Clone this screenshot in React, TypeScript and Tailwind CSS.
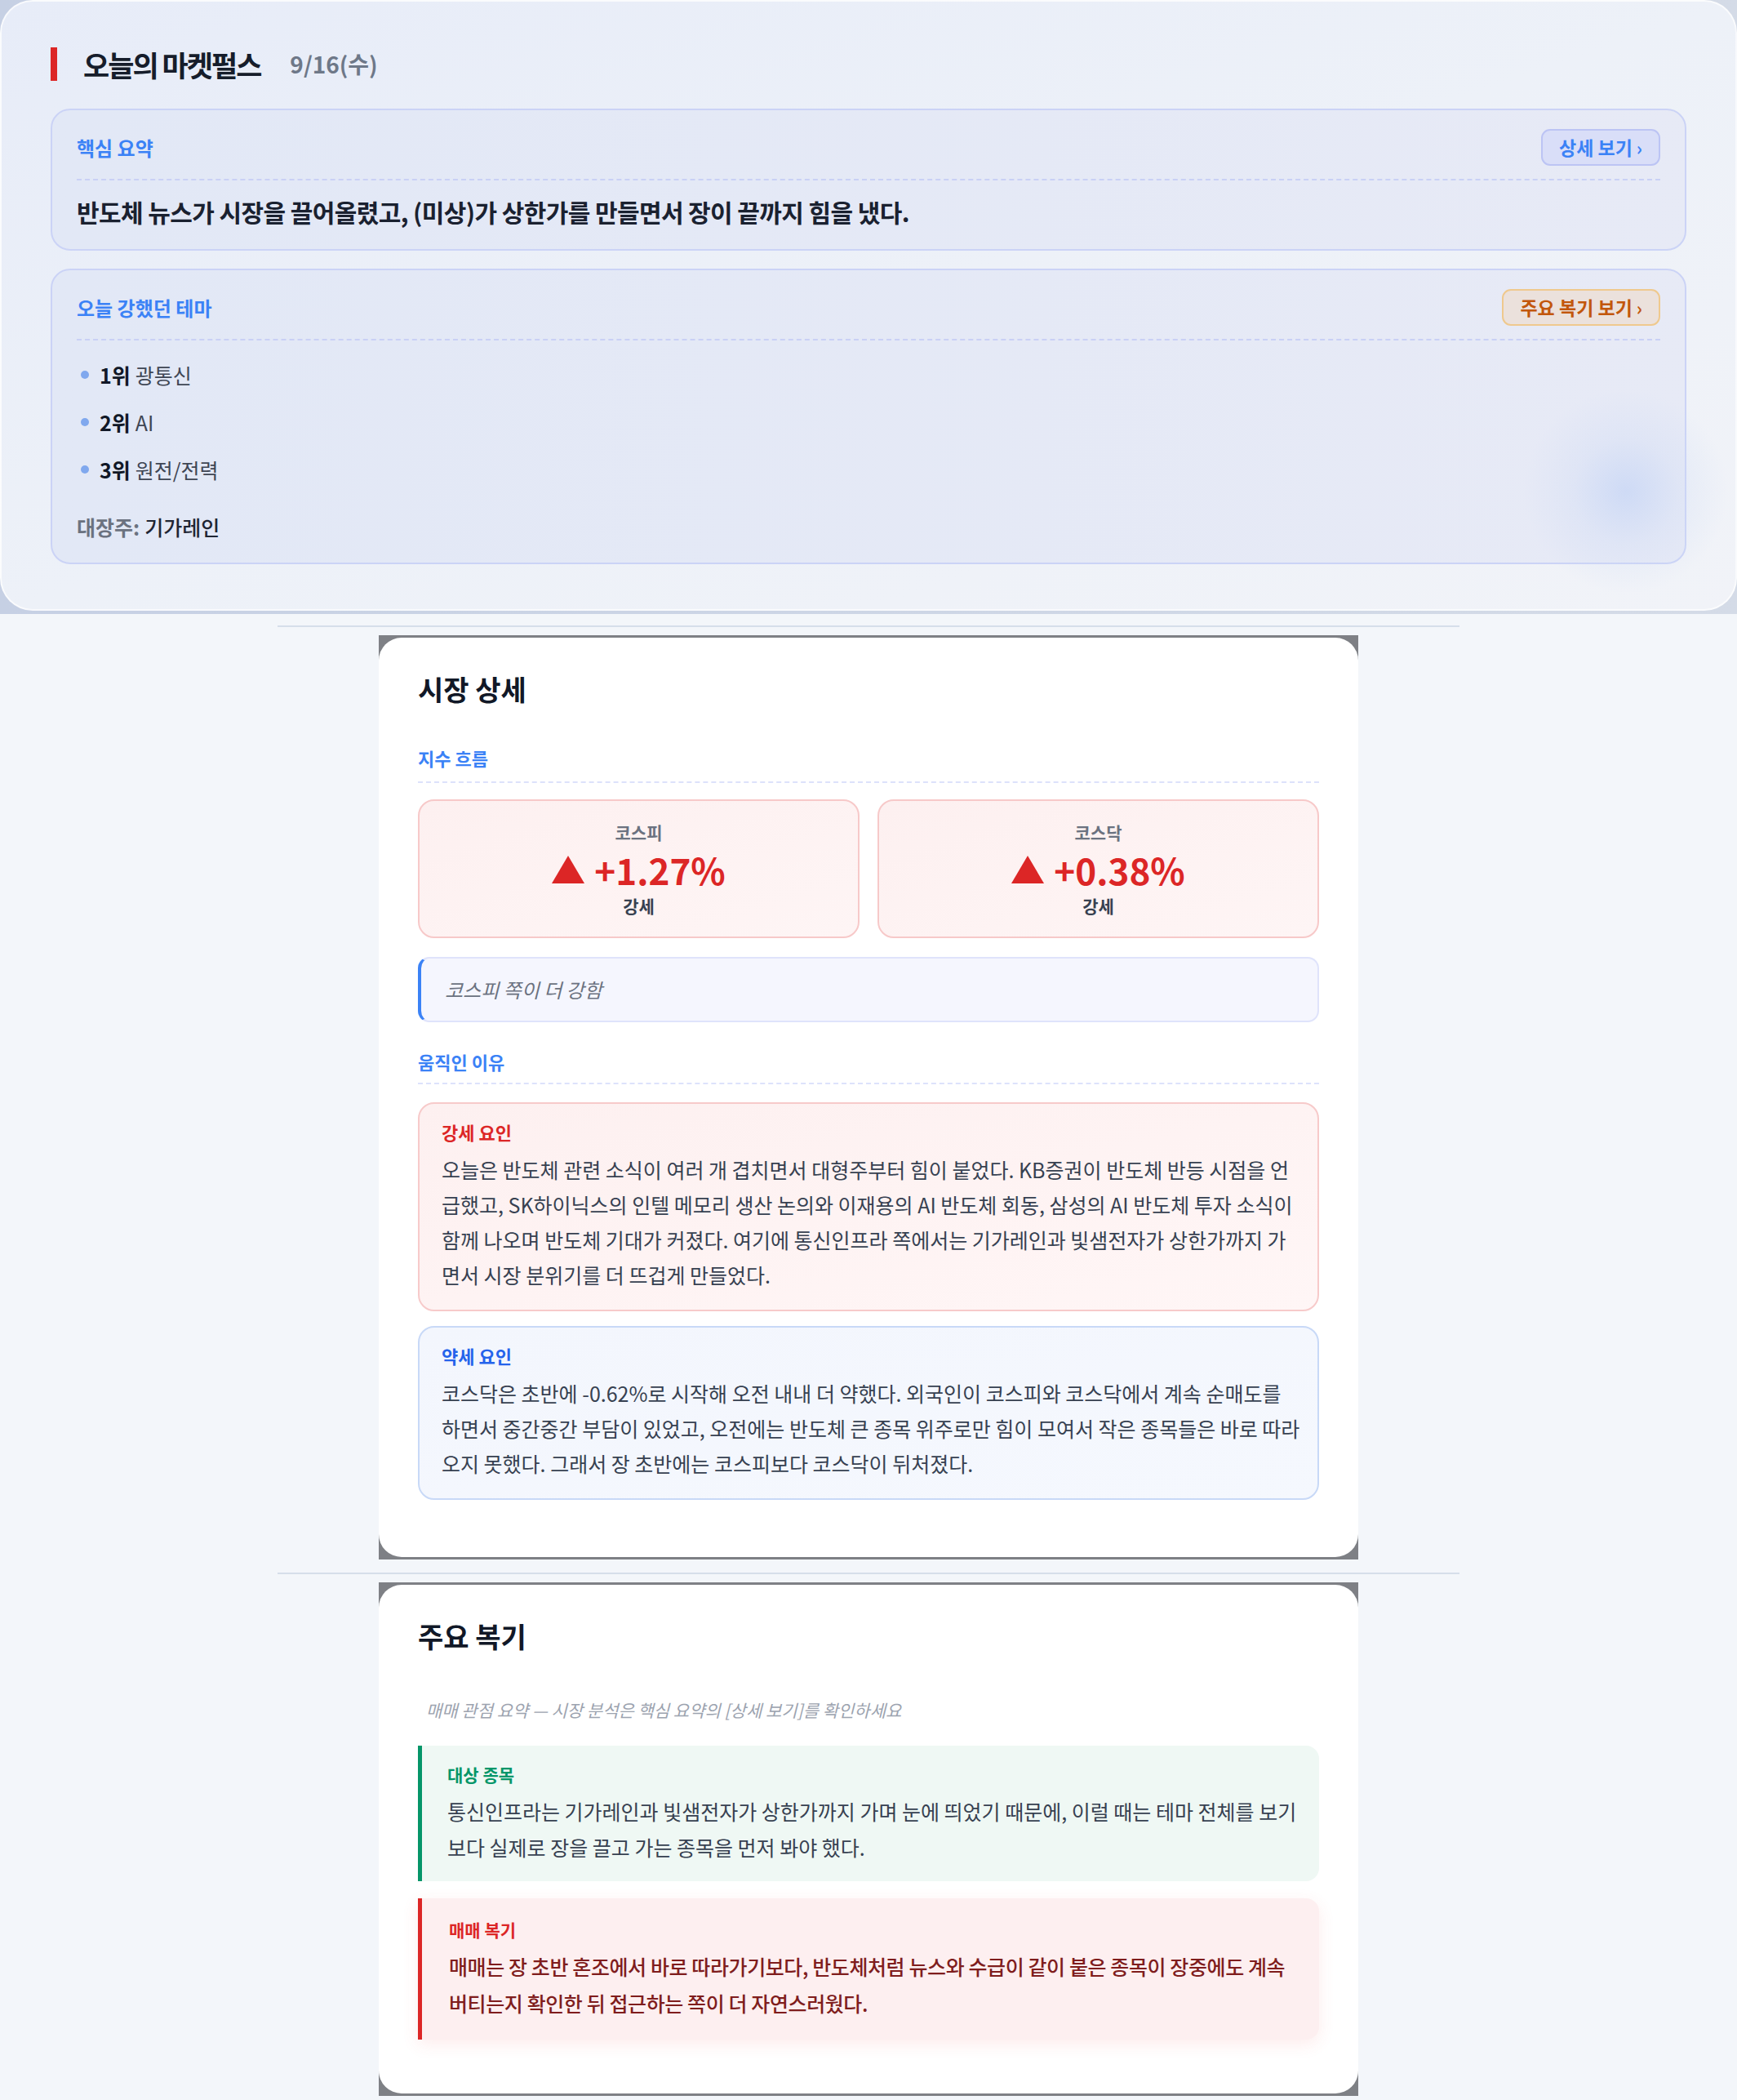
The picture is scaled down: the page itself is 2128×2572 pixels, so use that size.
import React from 'react';

const themes = [
  { rank: '1위', name: '광통신' },
  { rank: '2위', name: 'AI' },
  { rank: '3위', name: '원전/전력' },
];

function UpTriangle() {
  return (
    <svg width="40" height="34" viewBox="0 0 40 34" className="shrink-0">
      <path d="M20 0 L40 34 L0 34 Z" fill="#dc2626" />
    </svg>
  );
}

function IndexCard({ label, value }: { label: string; value: string }) {
  return (
    <div className="h-[170px] rounded-[20px] border-2 border-[#f7c9c9] bg-gradient-to-br from-[#fdf0f0] to-[#fef5f5] flex flex-col items-center justify-center">
      <div className="text-[21px] leading-[28px] font-semibold text-[#6b7280]">{label}</div>
      <div className="mt-[7px] h-[50px] flex items-center gap-[12px]">
        <UpTriangle />
        <span className="text-[44px] leading-[50px] font-bold text-[#dc2626]">{value}</span>
      </div>
      <div className="mt-[5px] text-[21px] leading-[28px] font-semibold text-[#374151]">강세</div>
    </div>
  );
}

function SectionLabel({ children, className }: { children: React.ReactNode; className: string }) {
  return (
    <div className={`border-b-2 border-dashed border-[#dde2fb] ${className}`}>
      <span className="text-[22px] leading-[28px] font-bold text-[#3b82f6]">{children}</span>
    </div>
  );
}

export default function App() {
  return (
    <div className="min-h-screen bg-[#f3f6fa] font-['Noto_Sans_CJK_KR',sans-serif] text-[#111827]">
      {/* Market pulse header panel */}
      <div className="bg-gradient-to-r from-[#c6d0e4] to-[#d4dbe7] pb-[4px]">
        <div className="relative overflow-hidden rounded-[40px] border-2 border-white/70 bg-gradient-to-br from-[#e7ecf8] via-[#edf1f8] to-[#f1f3f8] px-[60px] pt-[56px] pb-[55px]">
          <div className="flex items-center h-[41px]">
            <div className="w-[8px] h-[41px] bg-[#dc2626]" />
            <h1 className="ml-[32px] text-[35px] leading-[41px] font-bold tracking-[-2px] text-[#161d2b]">오늘의 마켓펄스</h1>
            <span className="ml-[36px] text-[28px] leading-[41px] font-semibold text-[#6e7888]">9/16(수)</span>
          </div>

          {/* Summary card */}
          <div className="mt-[34px] rounded-[24px] border-2 border-[#cbd3f6] bg-gradient-to-r from-[#e2e8f6] to-[#e7eaf6] px-[30px] pt-[23px] pb-[24px]">
            <div className="flex items-center justify-between pb-[16px] border-b-2 border-dashed border-[#c9d0f5]">
              <span className="text-[24px] leading-[28px] font-bold text-[#3b82f6]">핵심 요약</span>
              <button className="h-[45px] px-[20px] rounded-[11px] border-2 border-[#bcc4f4] bg-[#d9def8] text-[23px] font-semibold text-[#3b82f6] flex items-center">
                상세 보기<span className="ml-[5px] text-[22px]">›</span>
              </button>
            </div>
            <p className="mt-[16px] text-[30px] leading-[44px] font-semibold tracking-[-0.6px] text-[#1a2130]">
              반도체 뉴스가 시장을 끌어올렸고, (미상)가 상한가를 만들면서 장이 끝까지 힘을 냈다.
            </p>
          </div>

          {/* Themes card */}
          <div className="mt-[22px] rounded-[24px] border-2 border-[#cbd3f6] bg-gradient-to-r from-[#e2e8f6] to-[#e7eaf6] px-[30px] pt-[23px] pb-[22px]">
            <div className="flex items-center justify-between pb-[16px] border-b-2 border-dashed border-[#c9d0f5]">
              <span className="text-[24px] leading-[28px] font-bold text-[#3b82f6]">오늘 강했던 테마</span>
              <button className="h-[45px] px-[20px] rounded-[11px] border-2 border-[#efc98e] bg-[#ebe1dc] text-[23px] font-semibold text-[#c2570c] flex items-center">
                주요 복기 보기<span className="ml-[5px] text-[22px]">›</span>
              </button>
            </div>
            <ul className="mt-[13px] pl-[5px]">
              {themes.map((t) => (
                <li key={t.rank} className="h-[58px] flex items-center">
                  <span className="w-[10px] h-[10px] rounded-full bg-[#80a8ee]" />
                  <span className="ml-[13px] text-[25px] leading-[44px]">
                    <b className="font-bold text-[#111827]">{t.rank}</b>
                    <span className="ml-[6px] text-[#3f4654]">{t.name}</span>
                  </span>
                </li>
              ))}
            </ul>
            <div className="mt-[19px] text-[25px] leading-[44px]">
              <span className="font-semibold text-[#6b7280]">대장주:</span>
              <span className="ml-[6px] font-medium text-[#1f2533]">기가레인</span>
            </div>
          </div>

          <div className="pointer-events-none absolute left-[1860px] top-[470px] w-[260px] h-[260px] rounded-full bg-[radial-gradient(circle,rgba(190,208,245,0.6)_0%,rgba(205,218,245,0.3)_35%,rgba(230,235,248,0)_68%)]" />
        </div>
      </div>

      <div className="mx-auto mt-[14px] w-[1448px] h-[2px] bg-[#d6deea]" />

      {/* Market detail */}
      <div className="mx-auto mt-[10px] w-[1200px] bg-[#7e8085] py-[3px]">
        <div className="rounded-[28px] bg-white px-[48px] pt-[44px] pb-[70px]">
          <h2 className="text-[34px] leading-[38px] font-bold text-[#111827]">시장 상세</h2>

          <SectionLabel className="mt-[51px] pb-[14px]">지수 흐름</SectionLabel>
          <div className="mt-[20px] grid grid-cols-2 gap-[22px]">
            <IndexCard label="코스피" value="+1.27%" />
            <IndexCard label="코스닥" value="+0.38%" />
          </div>
          <div className="mt-[23px] h-[80px] flex items-center rounded-[14px] border-2 border-l-4 border-[#dfe3fb] border-l-[#3b82f6] bg-[#f5f6fe] pl-[29px]">
            <span className="text-[24px] italic text-[#6b7280]">코스피 쪽이 더 강함</span>
          </div>

          <SectionLabel className="mt-[34px] pb-[11px]">움직인 이유</SectionLabel>
          <div className="mt-[22px] rounded-[20px] border-2 border-[#f7caca] bg-gradient-to-br from-[#fdf0f0] to-[#fff6f6] px-[27px] pt-[21px] pb-[21px]">
            <div className="text-[22px] leading-[26px] font-bold text-[#dc2626]">강세 요인</div>
            <p className="mt-[12px] text-[25px] leading-[43px] text-[#374151]">
              오늘은 반도체 관련 소식이 여러 개 겹치면서 대형주부터 힘이 붙었다. KB증권이 반도체 반등 시점을 언급했고, SK하이닉스의 인텔 메모리 생산 논의와 이재용의 AI 반도체 회동, 삼성의 AI 반도체 투자 소식이 함께 나오며 반도체 기대가 커졌다. 여기에 통신인프라 쪽에서는 기가레인과 빛샘전자가 상한가까지 가면서 시장 분위기를 더 뜨겁게 만들었다.
            </p>
          </div>
          <div className="mt-[18px] rounded-[20px] border-2 border-[#c8d9f7] bg-gradient-to-br from-[#f3f6fd] to-[#f5f8fe] pl-[27px] pr-[18px] pt-[21px] pb-[21px]">
            <div className="text-[22px] leading-[26px] font-bold text-[#2563eb]">약세 요인</div>
            <p className="mt-[12px] text-[25px] leading-[43px] text-[#374151]">
              코스닥은 초반에 -0.62%로 시작해 오전 내내 더 약했다. 외국인이 코스피와 코스닥에서 계속 순매도를 하면서 중간중간 부담이 있었고, 오전에는 반도체 큰 종목 위주로만 힘이 모여서 작은 종목들은 바로 따라오지 못했다. 그래서 장 초반에는 코스피보다 코스닥이 뒤처졌다.
            </p>
          </div>
        </div>
      </div>

      <div className="mx-auto mt-[16px] w-[1448px] h-[2px] bg-[#d6deea]" />

      {/* Key review */}
      <div className="mx-auto mt-[10px] w-[1200px] bg-[#7e8085] py-[3px]">
        <div className="rounded-[28px] bg-white px-[48px] pt-[44px] pb-[66px]">
          <h2 className="text-[34px] leading-[38px] font-bold text-[#111827]">주요 복기</h2>
          <p className="mt-[56px] pl-[10px] text-[21px] leading-[30px] italic text-[#9ca3af]">
            매매 관점 요약 — 시장 분석은 핵심 요약의 [상세 보기]를 확인하세요
          </p>

          <div className="mt-[29px] rounded-r-[16px] border-l-[5px] border-[#059669] bg-[#eff8f4] pl-[31px] pr-[22px] pt-[22px] pb-[20px]">
            <div className="text-[21px] leading-[26px] font-bold text-[#059669]">대상 종목</div>
            <p className="mt-[10px] text-[25px] leading-[44px] text-[#374151]">
              통신인프라는 기가레인과 빛샘전자가 상한가까지 가며 눈에 띄었기 때문에, 이럴 때는 테마 전체를 보기보다 실제로 장을 끌고 가는 종목을 먼저 봐야 했다.
            </p>
          </div>

          <div className="mt-[21px] rounded-r-[16px] border-l-[5px] border-[#dc2626] bg-[#fdeff0] pl-[33px] pr-[30px] pt-[25px] pb-[22px] shadow-[0_6px_20px_rgba(239,68,68,0.10)]">
            <div className="text-[21px] leading-[26px] font-bold text-[#dc2626]">매매 복기</div>
            <p className="mt-[10px] text-[25px] leading-[45px] font-medium tracking-[-0.4px] text-[#7f1d1d]">
              매매는 장 초반 혼조에서 바로 따라가기보다, 반도체처럼 뉴스와 수급이 같이 붙은 종목이 장중에도 계속 버티는지 확인한 뒤 접근하는 쪽이 더 자연스러웠다.
            </p>
          </div>
        </div>
      </div>
    </div>
  );
}
